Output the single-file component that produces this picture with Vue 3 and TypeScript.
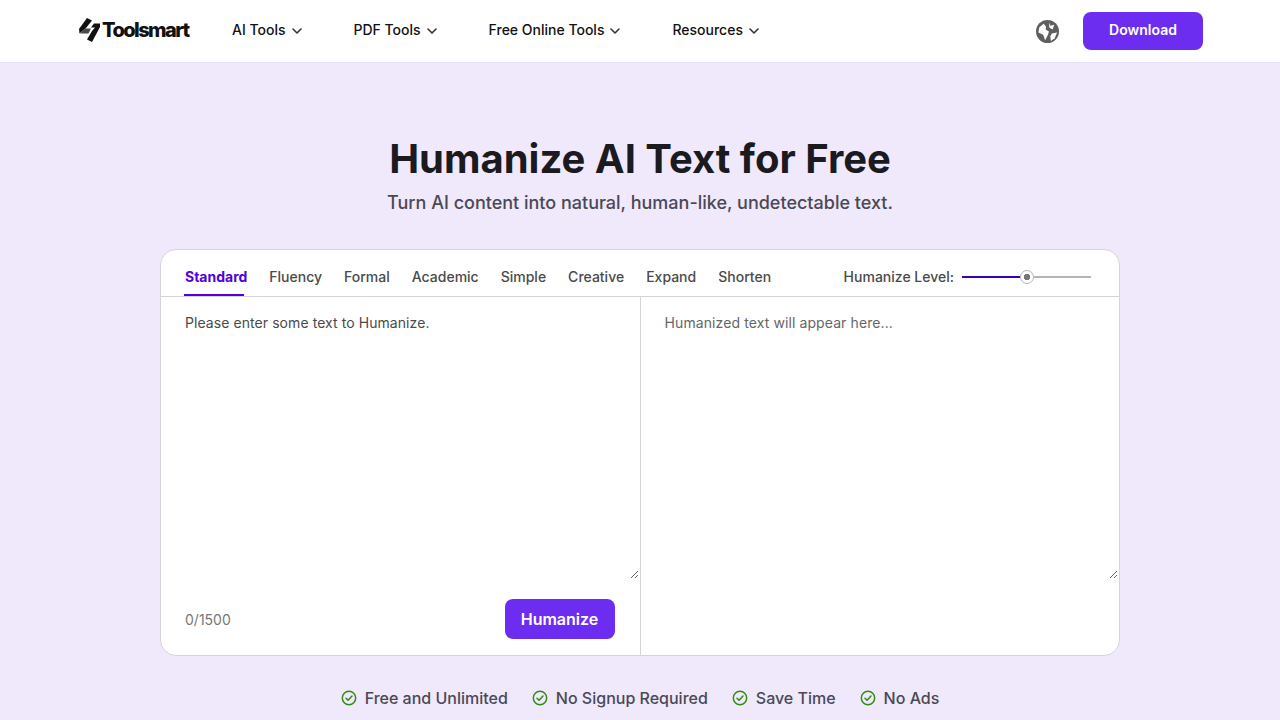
<template>
  <div class="page">
    <header class="topbar">
      <div class="logo">
        <svg class="logo-mark" width="21" height="24" viewBox="0 0 21 24">
          <path d="M8 0 L13 2.5 L7 10 L0.5 15.5 L0 11 Z" fill="#111" />
          <path d="M1 15.5 L6 10.5 L12 10.5 L9.5 15.5 Z" fill="#4a4a4a" />
          <path d="M15 5.5 L21 5.5 L21 9 L13 24 L8 21.5 L13 13 L16 9.5 L12 9.5 Z" fill="#111" />
        </svg>
        <span class="logo-text">Toolsmart</span>
      </div>
      <nav class="nav">
        <a v-for="item in navItems" :key="item" class="nav-item">
          {{ item }}
          <svg width="10" height="6" viewBox="0 0 10 6" fill="none">
            <path d="M1 1l4 4 4-4" stroke="#333" stroke-width="1.6" stroke-linecap="round" stroke-linejoin="round" />
          </svg>
        </a>
      </nav>
      <div class="topbar-right">
        <svg class="globe" width="23" height="23" viewBox="0 0 24 24">
          <circle cx="12" cy="12" r="12" fill="#5f5f5f" />
          <path d="M3.5 7.5 L8 4 L10.5 7 L10 10 L13.5 12 L12.5 15.5 L9.5 21 L7.5 15.5 L2.5 13 Z" fill="#fff" />
          <path d="M13.5 2.5 L15 6 L19 5 L17.5 10 L14 8 Z" fill="#fff" />
          <path d="M16.5 14 L22 13 L19.5 19 L15.5 22 L15 17 Z" fill="#fff" />
        </svg>
        <button class="download" type="button">Download</button>
      </div>
    </header>

    <main class="main">
      <h1 class="title">Humanize AI Text for Free</h1>
      <p class="subtitle">Turn AI content into natural, human-like, undetectable text.</p>

      <section class="card">
        <div class="tabs-row">
          <div class="tabs">
            <span
              v-for="tab in tabs"
              :key="tab"
              class="tab"
              :class="{ active: tab === activeTab }"
            >{{ tab }}</span>
          </div>
          <div class="level">
            <span class="level-label">Humanize Level:</span>
            <div class="slider">
              <div class="slider-fill"></div>
              <div class="slider-thumb"></div>
              <div class="slider-rest"></div>
            </div>
          </div>
        </div>
        <div class="panes">
          <div class="pane pane-left">
            <textarea class="input" placeholder="Please enter some text to Humanize."></textarea>
            <div class="pane-footer">
              <span class="count">0/1500</span>
              <button class="humanize" type="button">Humanize</button>
            </div>
          </div>
          <div class="pane">
            <textarea class="input output" placeholder="Humanized text will appear here..." readonly></textarea>
          </div>
        </div>
      </section>

      <ul class="features">
        <li v-for="feature in features" :key="feature" class="feature">
          <svg width="16" height="16" viewBox="0 0 16 16" fill="none">
            <circle cx="8" cy="8" r="6.7" stroke="#358a14" stroke-width="1.5" />
            <path d="M5 8.2l2.1 2.1L11 6" stroke="#358a14" stroke-width="1.5" stroke-linecap="round" stroke-linejoin="round" />
          </svg>
          {{ feature }}
        </li>
      </ul>
    </main>
  </div>
</template>

<script setup lang="ts">
const navItems = ['AI Tools', 'PDF Tools', 'Free Online Tools', 'Resources'];
const tabs = ['Standard', 'Fluency', 'Formal', 'Academic', 'Simple', 'Creative', 'Expand', 'Shorten'];
const activeTab = 'Standard';
const features = ['Free and Unlimited', 'No Signup Required', 'Save Time', 'No Ads'];
</script>

<style>
html,
body {
  margin: 0;
  height: 720px;
  overflow: hidden;
}
</style>

<style scoped>
.page {
  height: 720px;
  overflow: hidden;
  background: #f0e9fc;
  font-family: Inter, "Liberation Sans", sans-serif;
}

.topbar {
  display: flex;
  align-items: center;
  height: 62px;
  padding: 0 77px 0 79px;
  background: #fff;
  border-bottom: 1px solid #e6def3;
}

.logo {
  display: flex;
  align-items: center;
  gap: 2px;
  width: 153px;
  padding-bottom: 2px;
}

.logo-text {
  color: #111;
  font-size: 20px;
  font-weight: 800;
  letter-spacing: -1.55px;
}

.nav {
  display: flex;
  gap: 52px;
  padding-bottom: 4px;
}

.nav-item {
  display: flex;
  align-items: center;
  gap: 6px;
  color: #111;
  font-size: 14px;
  font-weight: 500;
}

.nav-item svg {
  margin-top: 4px;
}

.topbar-right {
  display: flex;
  align-items: center;
  gap: 24px;
  margin-left: auto;
}

.download {
  width: 120px;
  height: 38px;
  padding-bottom: 4px;
  border: none;
  border-radius: 8px;
  background: #6d2df0;
  color: #fff;
  font: 600 14px Inter, sans-serif;
}

.main {
  display: flex;
  flex-direction: column;
  align-items: center;
  padding-top: 72px;
}

.title {
  margin: 0;
  color: #1b1a1f;
  font-size: 40px;
  font-weight: 700;
  line-height: 48px;
}

.subtitle {
  margin: 8px 0 0;
  color: #4a4855;
  font-size: 18px;
  font-weight: 500;
  line-height: 24px;
}

.card {
  width: 958px;
  height: 405px;
  margin-top: 34px;
  display: flex;
  flex-direction: column;
  border: 1px solid #d6d3dc;
  border-radius: 16px;
  background: #fff;
  overflow: hidden;
}

.tabs-row {
  display: flex;
  align-items: stretch;
  justify-content: space-between;
  height: 46px;
  flex: none;
  padding: 0 28px 0 24px;
  border-bottom: 1px solid #d6d3dc;
}

.tabs {
  display: flex;
  gap: 22px;
}

.tab {
  position: relative;
  display: flex;
  align-items: center;
  height: 46px;
  box-sizing: border-box;
  padding-top: 6px;
  color: #4a4a4a;
  font-size: 14px;
  font-weight: 500;
}

.tab.active {
  color: #5200e0;
  font-weight: 700;
}

.tab.active::after {
  content: "";
  position: absolute;
  left: -1px;
  bottom: 0;
  width: 60px;
  height: 2px;
  background: #5200e0;
}

.level {
  display: flex;
  align-items: center;
  gap: 8px;
  padding-top: 8px;
  color: #4a4a4a;
  font-size: 14px;
  font-weight: 500;
}

.level-label {
  padding-bottom: 2px;
}

.slider {
  display: flex;
  align-items: center;
  width: 129px;
}

.slider-fill {
  width: 58px;
  height: 2px;
  background: #3a00b8;
}

.slider-thumb {
  box-sizing: border-box;
  width: 14px;
  height: 14px;
  border: 1px solid #b5b5b5;
  border-radius: 50%;
  background: radial-gradient(circle, #777 0 3px, #fff 3.5px);
}

.slider-rest {
  flex: 1;
  height: 2px;
  background: #b5b5b5;
}

.panes {
  display: flex;
  flex: 1;
  min-height: 0;
}

.pane {
  flex: 1;
  display: flex;
  flex-direction: column;
  min-width: 0;
}

.pane-left {
  border-right: 1px solid #d6d3dc;
}

.input {
  display: block;
  box-sizing: border-box;
  width: calc(100% - 1px);
  height: 282px;
  flex: none;
  padding: 16px 24px;
  border: none;
  outline: none;
  resize: vertical;
  background: transparent;
  font: 400 14px/20px Inter, sans-serif;
  letter-spacing: 0.07px;
  color: #444;
}

.input::placeholder {
  color: #4a4a4a;
  opacity: 1;
}

.output {
  letter-spacing: 0.1px;
}

.output::placeholder {
  color: #666;
}

.pane-footer {
  display: flex;
  align-items: center;
  justify-content: space-between;
  margin-top: 20px;
  padding: 0 25px 0 24px;
}

.count {
  color: #777;
  font-size: 14px;
}

.humanize {
  width: 110px;
  height: 40px;
  border: none;
  border-radius: 8px;
  background: #6d2df0;
  color: #fff;
  font: 600 16px Inter, sans-serif;
}

.features {
  display: flex;
  gap: 24px;
  margin: 32px 0 0;
  padding: 0;
  list-style: none;
}

.feature {
  display: flex;
  align-items: center;
  gap: 8px;
  color: #4a4855;
  font-size: 16px;
  font-weight: 500;
  line-height: 20px;
}
</style>
